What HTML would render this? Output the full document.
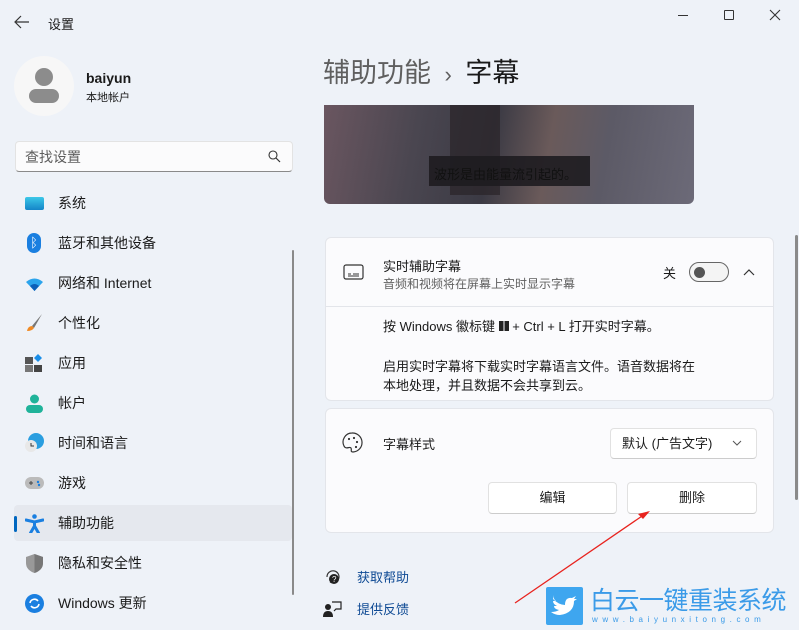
<!DOCTYPE html>
<html><head><meta charset="utf-8"><style>
*{margin:0;padding:0;box-sizing:border-box}
body{width:799px;height:630px;overflow:hidden;background:#eef2f8;font-family:"Liberation Sans","Noto Sans CJK SC",sans-serif;color:#1a1a1a;position:relative}
.a{position:absolute}
.nav{position:absolute;left:58px;font-size:14px;line-height:16px}
.ic{position:absolute;left:25px;width:19px;height:19px}
.card{position:absolute;background:#fbfbfd;border:1px solid #e3e5ea;border-radius:6px}
.btn{position:absolute;background:#fff;border:1px solid #e1e1e1;border-bottom-color:#ccc;border-radius:4px;font-size:13px;text-align:center;line-height:30px}
</style></head><body>
<svg class="a" style="left:14px;top:15px" width="16" height="14"><path d="M15 7H2M7 1L1 7l6 6" stroke="#333" stroke-width="1.2" fill="none"/></svg>
<div class="a" style="left:48px;top:14px;font-size:13px">设置</div>
<div class="a" style="left:678px;top:15px;width:10px;border-top:1px solid #333"></div>
<div class="a" style="left:724px;top:10px;width:10px;height:10px;border:1px solid #333;border-radius:1px"></div>
<svg class="a" style="left:769px;top:9px" width="12" height="12"><path d="M1 1l10 10M11 1L1 11" stroke="#333" stroke-width="1.1"/></svg>
<div class="a" style="left:14px;top:56px;width:60px;height:60px;border-radius:50%;background:#f7f7f7"></div>
<div class="a" style="left:35px;top:68px;width:18px;height:18px;border-radius:50%;background:#8c8c8c"></div>
<div class="a" style="left:29px;top:89px;width:30px;height:14px;border-radius:8px;background:#8c8c8c"></div>
<div class="a" style="left:86px;top:70px;font-size:14px;font-weight:bold">baiyun</div>
<div class="a" style="left:86px;top:89px;font-size:11px">本地帐户</div>
<div class="a" style="left:15px;top:141px;width:278px;height:31px;background:#fbfbfc;border:1px solid #e3e3e3;border-bottom:1px solid #8a8a8a;border-radius:4px"></div>
<div class="a" style="left:25px;top:147px;font-size:14px;color:#5d5d5d">查找设置</div>
<svg class="a" style="left:268px;top:150px" width="13" height="13"><circle cx="5" cy="5" r="4" stroke="#333" fill="none" stroke-width="1.1"/><path d="M8 8l4 4" stroke="#333" stroke-width="1.2"/></svg>
<div class="a" style="left:14px;top:505px;width:278px;height:36px;background:#e5e8ee;border-radius:4px"></div>
<div class="a" style="left:14px;top:516px;width:3px;height:16px;background:#0067c0;border-radius:2px"></div>
<div class="a" style="left:292px;top:250px;width:2px;height:345px;background:#8a8a8a;border-radius:1px"></div>
<div class="ic" style="top:197px;height:13px;background:linear-gradient(#3cc8e8,#1485c8);border-radius:2px"></div>
<div class="nav" style="top:195px">系统</div>
<div class="ic" style="top:233px;left:27px;width:14px;height:20px;border-radius:7px;background:#1a7fe0;color:#fff;font-size:13px;text-align:center;line-height:20px">ᛒ</div>
<div class="nav" style="top:235px">蓝牙和其他设备</div>
<svg class="ic" style="top:276px" viewBox="0 0 19 19"><path d="M1 6q8.5-7 17 0l-8.5 9z" fill="#2ba4ec"/><path d="M5 10q4.5-4 9 0l-4.5 5z" fill="#0c5fb8"/></svg>
<div class="nav" style="top:275px">网络和 Internet</div>
<svg class="ic" style="top:313px" viewBox="0 0 19 19"><path d="M17 1L7 13l2 2z" fill="#777"/><path d="M7 13q-4 0-5 5q5 0 7-3z" fill="#f08a24"/></svg>
<div class="nav" style="top:315px">个性化</div>
<svg class="ic" style="top:354px" viewBox="0 0 19 19"><rect x="0" y="3" width="8" height="7" fill="#555"/><rect x="0" y="11" width="8" height="7" fill="#777"/><rect x="9" y="11" width="8" height="7" fill="#444"/><path d="M13 0l4 4-4 4-4-4z" fill="#1a8ee8"/></svg>
<div class="nav" style="top:355px">应用</div>
<svg class="ic" style="top:394px" viewBox="0 0 19 19"><circle cx="9.5" cy="5" r="4.5" fill="#1fb39a"/><rect x="1" y="11" width="17" height="8" rx="4" fill="#1fb39a"/></svg>
<div class="nav" style="top:395px">帐户</div>
<svg class="ic" style="top:433px" viewBox="0 0 19 19"><circle cx="11" cy="8" r="8" fill="#2a9ee0"/><circle cx="6" cy="13" r="6" fill="#e8e8e8"/><path d="M6 10v3h3" stroke="#333" fill="none"/></svg>
<div class="nav" style="top:435px">时间和语言</div>
<svg class="ic" style="top:474px" viewBox="0 0 19 19"><rect x="0" y="3" width="19" height="12" rx="6" fill="#bbb"/><path d="M4 9h4M6 7v4" stroke="#444"/><circle cx="13" cy="8" r="1.2" fill="#1a7fe0"/><circle cx="14" cy="11" r="1.2" fill="#1a7fe0"/></svg>
<div class="nav" style="top:475px">游戏</div>
<svg class="ic" style="top:514px" viewBox="0 0 19 19"><circle cx="9.5" cy="2.5" r="2.3" fill="#1a7fe0"/><path d="M1 6l8.5 2 8.5-2M9.5 8v4M9.5 12l-4 7M9.5 12l4 7" stroke="#1a7fe0" stroke-width="3" fill="none" stroke-linecap="round"/></svg>
<div class="nav" style="top:515px">辅助功能</div>
<svg class="ic" style="top:554px" viewBox="0 0 19 19"><path d="M9.5 0L18 3v6q0 7-8.5 10Q1 16 1 9V3z" fill="#999"/><path d="M9.5 0L18 3v6q0 7-8.5 10z" fill="#777"/></svg>
<div class="nav" style="top:555px">隐私和安全性</div>
<svg class="ic" style="top:594px" viewBox="0 0 19 19"><circle cx="9.5" cy="9.5" r="9.5" fill="#1a7fe0"/><path d="M5 9a4.5 4.5 0 0 1 8-2M14 10a4.5 4.5 0 0 1-8 2" stroke="#fff" stroke-width="1.6" fill="none"/></svg>
<div class="nav" style="top:595px">Windows 更新</div>
<div class="a" style="left:323px;top:56px;font-size:27px;line-height:34px;color:#5f5f5f">辅助功能 <span style="font-size:22px;padding:0 6px">›</span> <span style="color:#1a1a1a">字幕</span></div>
<div class="a" style="left:324px;top:105px;width:370px;height:99px;border-radius:0 0 6px 6px;background:linear-gradient(100deg,#6a5660 0%,#4a4650 25%,#3b3a44 45%,#6a5a5a 60%,#5c5a66 75%,#6c6a78 100%)"></div>
<div class="a" style="left:450px;top:105px;width:50px;height:90px;background:#2a2428;opacity:.7"></div>
<div class="a" style="left:429px;top:156px;width:161px;height:30px;background:#1e1c20;opacity:.9"></div>
<div class="a" style="left:434px;top:164px;font-size:13px;color:#111">波形是由能量流引起的。</div>
<div class="card" style="left:325px;top:237px;width:449px;height:164px"></div>
<div class="a" style="left:325px;top:306px;width:449px;border-top:1px solid #e3e5ea"></div>
<svg class="a" style="left:343px;top:264px" width="21" height="16"><rect x="1" y="1" width="19" height="14" rx="2" stroke="#333" fill="none" stroke-width="1.2"/><path d="M5 10h3M10 10h6M5 12h11" stroke="#333"/></svg>
<div class="a" style="left:383px;top:256px;font-size:13px">实时辅助字幕</div>
<div class="a" style="left:383px;top:275px;font-size:12px;color:#606060">音频和视频将在屏幕上实时显示字幕</div>
<div class="a" style="left:663px;top:263px;font-size:13px">关</div>
<div class="a" style="left:689px;top:262px;width:40px;height:20px;border:1px solid #666;border-radius:10px;background:#f4f4f4"></div>
<div class="a" style="left:694px;top:267px;width:11px;height:11px;border-radius:50%;background:#555"></div>
<svg class="a" style="left:743px;top:268px" width="12" height="8"><path d="M1 7l5-5 5 5" stroke="#333" fill="none" stroke-width="1.2"/></svg>
<div class="a" style="left:383px;top:316px;font-size:13px">按 Windows 徽标键 <span style="display:inline-block;width:10px;height:10px;background:linear-gradient(90deg,#222 45%,transparent 45% 55%,#222 55%)"></span> + Ctrl + L 打开实时字幕。</div>
<div class="a" style="left:383px;top:357px;font-size:13px;line-height:19px">启用实时字幕将下载实时字幕语言文件。语音数据将在<br>本地处理，并且数据不会共享到云。</div>
<div class="card" style="left:325px;top:408px;width:449px;height:125px"></div>
<svg class="a" style="left:342px;top:432px" width="21" height="21"><path d="M10 1a9 9 0 0 0-8 13c2 4 6 0 7 2s-1 4 2 4a9 9 0 0 0-1-19z" stroke="#333" fill="none" stroke-width="1.2"/><circle cx="7" cy="7" r="1.1" fill="#333"/><circle cx="12" cy="6" r="1.1" fill="#333"/><circle cx="15" cy="10" r="1.1" fill="#333"/><circle cx="14" cy="15" r="1.1" fill="#333"/></svg>
<div class="a" style="left:383px;top:434px;font-size:13px">字幕样式</div>
<div class="btn" style="left:610px;top:428px;width:147px;height:31px;text-align:left;padding-left:11px;line-height:29px">默认 (广告文字)</div>
<svg class="a" style="left:732px;top:440px" width="10" height="6"><path d="M1 1l4 4 4-4" stroke="#555" fill="none"/></svg>
<div class="btn" style="left:488px;top:482px;width:129px;height:32px">编辑</div>
<div class="btn" style="left:627px;top:482px;width:130px;height:32px">删除</div>
<div class="a" style="left:795px;top:235px;width:3px;height:265px;background:#8a8a8a;border-radius:2px"></div>
<svg class="a" style="left:323px;top:567px" width="18" height="18"><path d="M4 10a6 6 0 1 1 3 5" stroke="#333" fill="none" stroke-width="1.2"/><circle cx="11" cy="12" r="5" fill="#222"/><text x="9" y="15" font-size="8" fill="#fff" font-family="Liberation Sans">?</text></svg>
<div class="a" style="left:357px;top:567px;font-size:13px;color:#0e4a94">获取帮助</div>
<svg class="a" style="left:323px;top:600px" width="20" height="18"><circle cx="5" cy="7" r="3" fill="#222"/><path d="M0 17q0-6 5-6t5 6z" fill="#222"/><path d="M9 2h9v7h-5l-2 2" stroke="#222" fill="none" stroke-width="1.2"/></svg>
<div class="a" style="left:357px;top:599px;font-size:13px;color:#0e4a94">提供反馈</div>
<svg class="a" style="left:0;top:0" width="799" height="630"><path d="M515 603L648 512" stroke="#e8231e" stroke-width="1.3"/><path d="M650 511l-12 3 5 5z" fill="#e8231e"/></svg>
<div class="a" style="left:546px;top:587px;width:37px;height:38px;background:#3ea6ef;border-radius:2px"></div>
<svg class="a" style="left:549px;top:593px" width="32" height="26"><path d="M4 6q6 6 12 6q0-8 7-7l4-2-2 3 3 0-3 2q0 12-14 14q-5 0-9-3q5 0 8-2q-5-1-5-4h3q-4-2-4-5h3q-3-2-2-6z" fill="#fff"/></svg>
<div class="a" style="left:590px;top:586px;font-size:25px;line-height:30px;color:#3b9be8;letter-spacing:-0.5px">白云一键重装系统</div>
<div class="a" style="left:592px;top:615px;font-size:8px;line-height:10px;color:#3b9be8;letter-spacing:4.6px">www.baiyunxitong.com</div>
</body></html>
